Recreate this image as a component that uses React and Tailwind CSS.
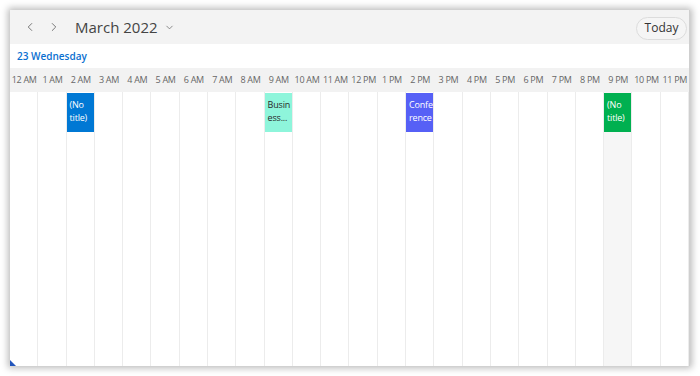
import React from 'react';
import { ChevronLeft, ChevronRight, ChevronDown } from 'lucide-react';

const hours = [
  '12 AM', '1 AM', '2 AM', '3 AM', '4 AM', '5 AM', '6 AM', '7 AM', '8 AM', '9 AM', '10 AM', '11 AM',
  '12 PM', '1 PM', '2 PM', '3 PM', '4 PM', '5 PM', '6 PM', '7 PM', '8 PM', '9 PM', '10 PM', '11 PM',
];

// appointments keyed by hour column
const events = {
  2: { lines: ['(No', 'title)'], cls: 'bg-[#0078d4] text-white' },
  9: { lines: ['Busin', 'ess...'], cls: 'bg-[#8ef5db] text-[#2a2a2a]' },
  14: { lines: ['Confe', 'rence'], cls: 'bg-[#5660f6] text-white' },
  21: { lines: ['(No', 'title)'], cls: 'bg-[#00b050] text-white' },
};

export default function App() {
  return (
    <div
      className="w-[700px] h-[376px] bg-white p-[10px] overflow-hidden"
      style={{ fontFamily: '"Open Sans", "Noto Sans", sans-serif' }}
    >
      <div className="relative w-full h-full bg-white flex flex-col border-r border-[#cfcfcf] shadow-[0_0_7px_2px_rgba(0,0,0,0.28)]">
        {/* Toolbar */}
        <div className="h-[34px] bg-[#f3f3f3] flex items-center pl-[13px] pr-[2px]">
          <button className="w-[14px] flex items-center justify-center text-[#666]">
            <ChevronLeft size={14} strokeWidth={1.5} />
          </button>
          <button className="w-[14px] ml-[10px] flex items-center justify-center text-[#666]">
            <ChevronRight size={14} strokeWidth={1.5} />
          </button>
          <div className="ml-[14px] flex items-center text-[#444] text-[15px] leading-none">
            March 2022
            <ChevronDown size={11} strokeWidth={1.6} className="ml-[6px] text-[#666]" />
          </div>
          <div className="flex-1" />
          <button className="h-[23px] w-[51px] mt-[2px] rounded-full border border-[#dcdcdc] text-[12px] text-[#333] leading-none bg-[#f5f5f5]">
            Today
          </button>
        </div>

        {/* Date row */}
        <div className="h-[24px] flex items-center pl-[7px] text-[10px] font-semibold text-[#0a6fd0]">
          23 Wednesday
        </div>

        {/* Time header */}
        <div className="h-[24px] bg-[#f2f2f2] grid grid-cols-24">
          {hours.map((h) => (
            <div key={h} className="flex items-center justify-center text-[9px] text-[#666] whitespace-nowrap tracking-[-0.3px]">
              {h}
            </div>
          ))}
        </div>

        {/* Grid */}
        <div className="flex-1 grid grid-cols-24">
          {hours.map((h, i) => {
            const ev = events[i];
            return (
              <div
                key={h}
                className={`border-r border-[#ececec] pt-[1px] ${i === 21 ? 'bg-[#f6f6f6]' : ''}`}
              >
                {ev && (
                  <div className={`h-[39px] pl-[3px] pt-[5px] text-[9px] leading-[13px] tracking-[-0.2px] overflow-hidden ${ev.cls}`}>
                    {ev.lines.map((l) => (
                      <div key={l} className="whitespace-nowrap">{l}</div>
                    ))}
                  </div>
                )}
              </div>
            );
          })}
        </div>

        <div className="absolute left-0 bottom-0 w-0 h-0 border-l-[3px] border-b-[3px] border-l-[#2255bb] border-b-[#2255bb] border-t-[3px] border-t-transparent border-r-[3px] border-r-transparent" />
      </div>
    </div>
  );
}
